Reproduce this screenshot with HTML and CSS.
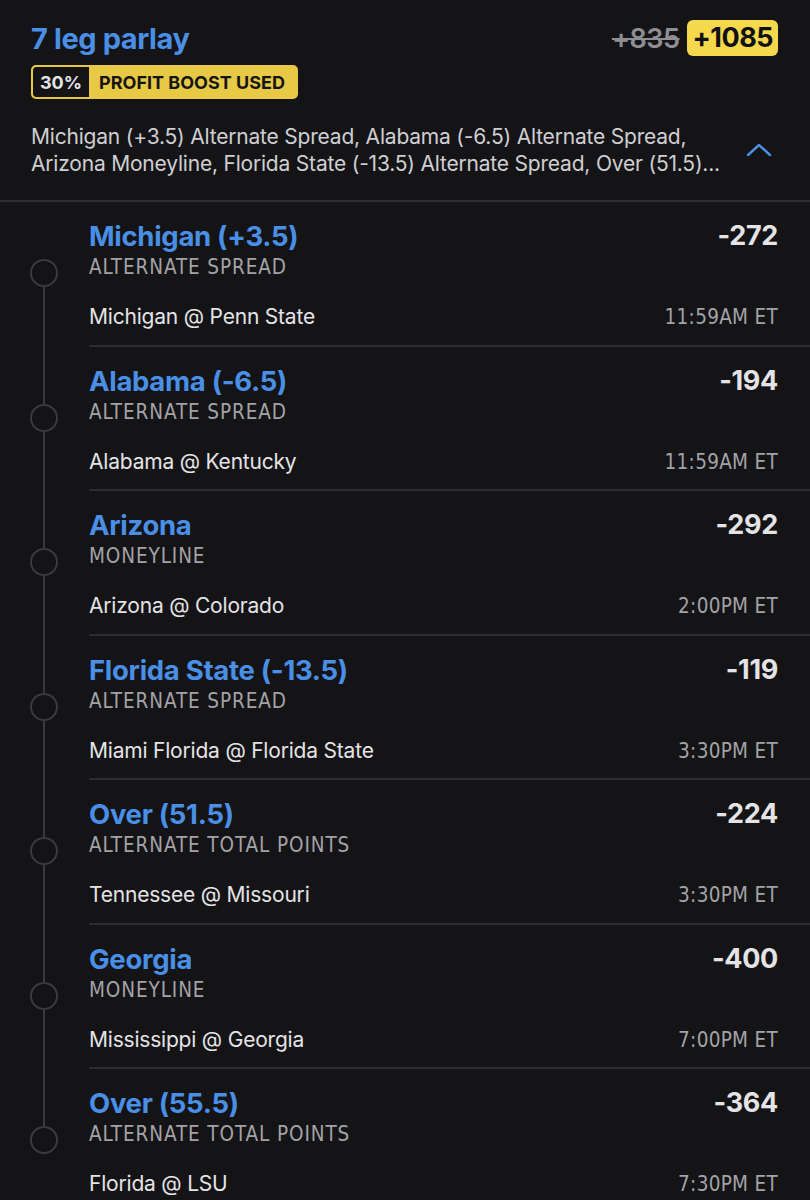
FILE: index.html
```html
<!DOCTYPE html>
<html lang="en">
<head>
<meta charset="utf-8">
<title>7 leg parlay</title>
<link rel="stylesheet" href="styles.css">
</head>
<body>
<div class="card">
  <header class="head">
    <div class="head-row">
      <h1 class="parlay-title">7 leg parlay</h1>
      <div class="odds-wrap">
        <span class="odds-old">+835</span>
        <span class="odds-new">+1085</span>
      </div>
    </div>
    <div class="boost"><span class="boost-pct">30%</span><span class="boost-label">PROFIT BOOST USED</span></div>
    <div class="summary-row">
      <p class="summary">Michigan (+3.5) Alternate Spread, Alabama (-6.5) Alternate Spread, Arizona Moneyline, Florida State (-13.5) Alternate Spread, Over (51.5)...</p>
      <svg class="chev" width="26" height="16" viewBox="0 0 26 16"><path d="M2 13 L13 3 L24 13" fill="none" stroke="#4a8fe6" stroke-width="2.4" stroke-linecap="round" stroke-linejoin="round"/></svg>
    </div>
  </header>

  <ul class="legs">
    <li class="leg">
      <div class="rail"><span class="dot"></span></div>
      <div class="leg-body">
        <div class="line1"><span class="pick">Michigan (+3.5)</span><span class="price">-272</span></div>
        <div class="market">ALTERNATE SPREAD</div>
        <div class="line3"><span class="game">Michigan @ Penn State</span><span class="time">11:59AM ET</span></div>
      </div>
    </li>
    <li class="leg">
      <div class="rail"><span class="dot"></span></div>
      <div class="leg-body">
        <div class="line1"><span class="pick">Alabama (-6.5)</span><span class="price">-194</span></div>
        <div class="market">ALTERNATE SPREAD</div>
        <div class="line3"><span class="game">Alabama @ Kentucky</span><span class="time">11:59AM ET</span></div>
      </div>
    </li>
    <li class="leg">
      <div class="rail"><span class="dot"></span></div>
      <div class="leg-body">
        <div class="line1"><span class="pick">Arizona</span><span class="price">-292</span></div>
        <div class="market">MONEYLINE</div>
        <div class="line3"><span class="game">Arizona @ Colorado</span><span class="time">2:00PM ET</span></div>
      </div>
    </li>
    <li class="leg">
      <div class="rail"><span class="dot"></span></div>
      <div class="leg-body">
        <div class="line1"><span class="pick">Florida State (-13.5)</span><span class="price">-119</span></div>
        <div class="market">ALTERNATE SPREAD</div>
        <div class="line3"><span class="game">Miami Florida @ Florida State</span><span class="time">3:30PM ET</span></div>
      </div>
    </li>
    <li class="leg">
      <div class="rail"><span class="dot"></span></div>
      <div class="leg-body">
        <div class="line1"><span class="pick">Over (51.5)</span><span class="price">-224</span></div>
        <div class="market">ALTERNATE TOTAL POINTS</div>
        <div class="line3"><span class="game">Tennessee @ Missouri</span><span class="time">3:30PM ET</span></div>
      </div>
    </li>
    <li class="leg">
      <div class="rail"><span class="dot"></span></div>
      <div class="leg-body">
        <div class="line1"><span class="pick">Georgia</span><span class="price">-400</span></div>
        <div class="market">MONEYLINE</div>
        <div class="line3"><span class="game">Mississippi @ Georgia</span><span class="time">7:00PM ET</span></div>
      </div>
    </li>
    <li class="leg">
      <div class="rail"><span class="dot"></span></div>
      <div class="leg-body">
        <div class="line1"><span class="pick">Over (55.5)</span><span class="price">-364</span></div>
        <div class="market">ALTERNATE TOTAL POINTS</div>
        <div class="line3"><span class="game">Florida @ LSU</span><span class="time">7:30PM ET</span></div>
      </div>
    </li>
  </ul>
</div>
</body>
</html>
```

FILE: styles.css
```css
* { box-sizing: border-box; }
html, body {
  margin: 0;
  padding: 0;
  background: #141416;
}
body {
  font-family: "Inter", "Lato", sans-serif;
  color: #e2e2e4;
  width: 810px;
  overflow: hidden;
}
.card { width: 810px; }

.head {
  padding: 19px 32px 0 31px;
  border-bottom: 2px solid #2e2e31;
}
.head-row {
  display: flex;
  justify-content: space-between;
  align-items: center;
  height: 38px;
}
.parlay-title {
  margin: 0;
  font-size: 29px;
  font-weight: 700;
  color: #4a8fe6;
  letter-spacing: -0.4px;
}
.odds-wrap {
  display: flex;
  align-items: center;
  gap: 8px;
}
.odds-old {
  font-size: 27px;
  font-weight: 600;
  color: #8e8e93;
  text-decoration: line-through;
  text-decoration-thickness: 2px;
  letter-spacing: -0.5px;
}
.odds-new {
  background: #f5d84c;
  color: #111114;
  font-size: 27px;
  font-weight: 700;
  border-radius: 6px;
  padding: 0 5px;
  height: 36px;
  line-height: 36px;
  letter-spacing: -0.5px;
}
.boost {
  display: inline-flex;
  margin-top: 8px;
  height: 34px;
  border: 2px solid #e8c945;
  border-radius: 5px;
  background: #e8c945;
  overflow: hidden;
  font-weight: 700;
  font-size: 18px;
}
.boost-pct {
  background: #141416;
  color: #e4e4e6;
  padding: 0 7px;
  display: flex;
  align-items: center;
  border-radius: 3px 0 0 3px;
}
.boost-label {
  color: #151515;
  padding: 0 11px 0 10px;
  display: flex;
  align-items: center;
}
.summary-row {
  display: flex;
  align-items: center;
  justify-content: space-between;
  padding: 24px 0 23px;
}
.summary {
  margin: 0;
  width: 700px;
  font-size: 21px;
  line-height: 27px;
  color: #cfcfd2;
  letter-spacing: -0.2px;
}
.chev { margin-right: 6px; }

.legs {
  list-style: none;
  margin: 0;
  padding: 0;
}
.leg {
  display: grid;
  grid-template-columns: 89px 1fr;
  height: 144.5px;
}
.rail { position: relative; }
.dot {
  position: absolute;
  left: 30px;
  top: 57px;
  width: 28px;
  height: 28px;
  border: 2px solid #3a3a3d;
  border-radius: 50%;
  background: #141416;
  z-index: 1;
}
.leg:not(:last-child) .rail::after {
  content: "";
  position: absolute;
  left: 43px;
  top: 85px;
  width: 2px;
  height: 117px;
  background: #3a3a3d;
}
.leg-body {
  padding: 18px 32px 0 0;
  border-bottom: 2px solid #2e2e31;
}
.line1, .line3 {
  display: flex;
  justify-content: space-between;
  align-items: center;
}
.pick {
  font-size: 27.5px;
  font-weight: 700;
  color: #4a8fe6;
  line-height: 32px;
  letter-spacing: -0.3px;
}
.price {
  font-size: 27px;
  font-weight: 700;
  color: #e4e4e6;
  line-height: 32px;
  letter-spacing: -0.3px;
}
.market {
  font-family: "DejaVu Sans", sans-serif;
  font-stretch: condensed;
  font-size: 20.5px;
  letter-spacing: 0.9px;
  color: #a3a3a7;
  line-height: 26px;
  margin-top: 2px;
}
.line3 { margin-top: 24px; height: 26px; }
.game {
  font-size: 21px;
  color: #e4e4e6;
  line-height: 26px;
  letter-spacing: -0.2px;
}
.time {
  font-family: "DejaVu Sans", sans-serif;
  font-stretch: condensed;
  font-size: 20.5px;
  letter-spacing: 0.3px;
  color: #a3a3a7;
  line-height: 26px;
}
```
